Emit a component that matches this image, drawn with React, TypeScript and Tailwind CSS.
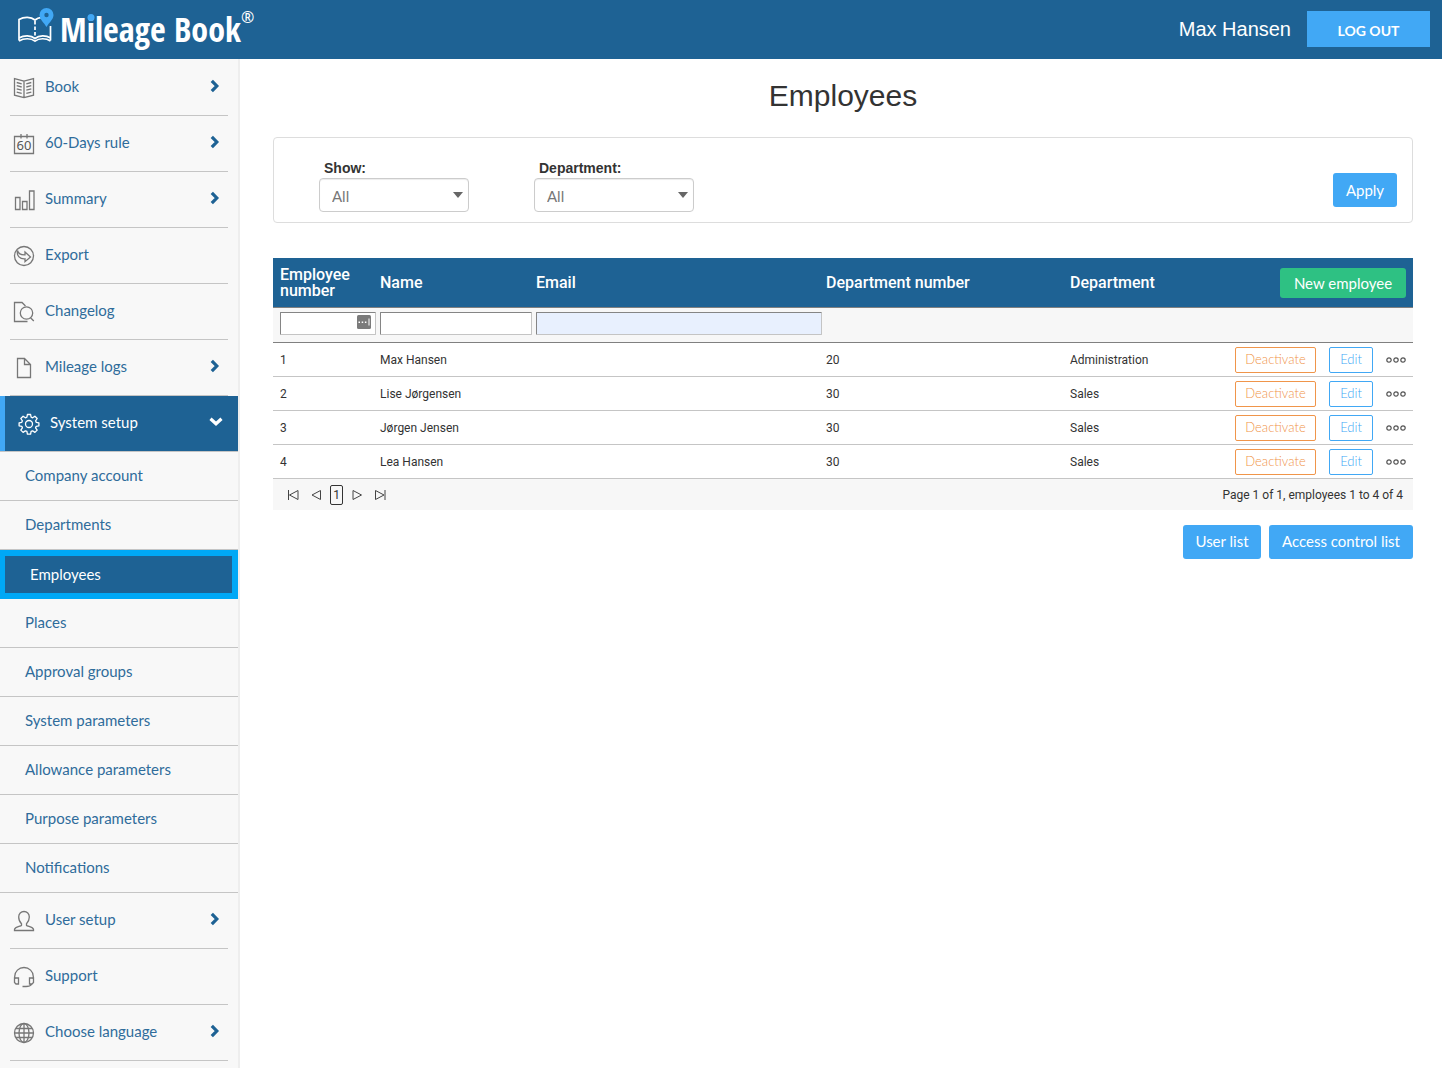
import type { ReactNode } from 'react';

interface NavItem {
  label: string;
  icon: ReactNode;
  expandable?: boolean;
}

interface Employee {
  number: number;
  name: string;
  email: string;
  departmentNumber: number;
  department: string;
}

const employees: Employee[] = [
  { number: 1, name: 'Max Hansen', email: '', departmentNumber: 20, department: 'Administration' },
  { number: 2, name: 'Lise Jørgensen', email: '', departmentNumber: 30, department: 'Sales' },
  { number: 3, name: 'Jørgen Jensen', email: '', departmentNumber: 30, department: 'Sales' },
  { number: 4, name: 'Lea Hansen', email: '', departmentNumber: 30, department: 'Sales' },
];

function Icon({ children }: { children: ReactNode }) {
  return (
    <svg
      viewBox="0 0 22 22"
      className="size-[22px] shrink-0"
      fill="none"
      stroke="currentColor"
      strokeWidth="1.3"
      aria-hidden="true">
      {children}
    </svg>
  );
}

const topItems: NavItem[] = [
  {
    label: 'Book',
    expandable: true,
    icon: (
      <Icon>
        <path d="M11 4.2 1.5 1.7v16.5L11 20.7l9.5-2.5V1.7L11 4.2zM11 4.2v16.5" />
        <path d="m3.700 5.500 5 1.300M3.700 8.700l5 1.300M3.700 11.900l5 1.300M3.700 15.100l5 1.300M18.300 5.500l-5 1.300M18.300 8.700l-5 1.300M18.300 11.900l-5 1.300M18.300 15.100l-5 1.300" />
      </Icon>
    ),
  },
  {
    label: '60-Days rule',
    expandable: true,
    icon: (
      <Icon>
        <path d="M1.500 3.500h19v17h-19zM8 1v4.500M14 1v4.500" />
        <text
          x="11"
          y="17"
          fontSize="13"
          textAnchor="middle"
          fill="#555"
          stroke="none"
          className="font-['Noto_Sans',sans-serif]">
          60
        </text>
      </Icon>
    ),
  },
  {
    label: 'Summary',
    expandable: true,
    icon: (
      <Icon>
        <path d="M2.500 8.500h4.500v12H2.500zM9.500 12.500H14v8H9.500zM16.500 2H21v18.500h-4.500z" />
      </Icon>
    ),
  },
  {
    label: 'Export',
    icon: (
      <Icon>
        <circle cx="11" cy="11" r="9.500" />
        <path d="M4.500 5.500c.8 3 3 4.500 7.500 4.400V7l5.500 5-5.500 4.700v-2.900C7 14.200 3.500 11 4.500 5.500z" />
      </Icon>
    ),
  },
  {
    label: 'Changelog',
    icon: (
      <Icon>
        <path d="M14.500 20.500h-13v-19H9l3.500 3.500" />
        <circle cx="13.500" cy="12" r="6.200" />
        <path d="m17.500 16.700 3.300 3.300" />
      </Icon>
    ),
  },
  {
    label: 'Mileage logs',
    expandable: true,
    icon: (
      <Icon>
        <path d="M4.500 1.500h7l6 6v13h-13zM11.500 1.500v6h6" />
      </Icon>
    ),
  },
];

const setupItems = [
  'Company account',
  'Departments',
  'Employees',
  'Places',
  'Approval groups',
  'System parameters',
  'Allowance parameters',
  'Purpose parameters',
  'Notifications',
];

const bottomItems: NavItem[] = [
  {
    label: 'User setup',
    expandable: true,
    icon: (
      <Icon>
        <path d="M11 1.500c-3 0-5.300 2-5.300 5.500 0 3 1 5 2.800 6.700v1.600c-.7 1.200-6.500 1.500-7 4v1.200h19v-1.200c-.5-2.500-6.300-2.800-7-4v-1.600c1.800-1.700 2.800-3.700 2.800-6.700 0-3.500-2.300-5.500-5.300-5.500z" />
      </Icon>
    ),
  },
  {
    label: 'Support',
    icon: (
      <Icon>
        <path d="M1.700 13V10.500a9.300 9 0 0 1 18.600 0V13" />
        <path d="M1.500 12h4v6h-2.500l-1.500-1.500zM20.500 12h-4v6h2.500l1.500-1.500zM18.500 18.500c-1 1.500-3 2-5.500 2H9.500" />
      </Icon>
    ),
  },
  {
    label: 'Choose language',
    expandable: true,
    icon: (
      <Icon>
        <circle cx="11" cy="11" r="9.500" />
        <ellipse cx="11" cy="11" rx="5" ry="9.500" />
        <path d="M11 1.500v19M1.500 11h19M3 6.500h16M3 15.500h16" />
      </Icon>
    ),
  },
];

function ChevronRight() {
  return (
    <svg
      viewBox="0 0 10 14"
      className="ml-auto h-3.5 w-2.5"
      fill="none"
      stroke="#1e6294"
      strokeWidth="3.2"
      aria-hidden="true">
      <path d="m1.800 1.800 5 5.200-5 5.200" />
    </svg>
  );
}

function SidebarItem({ item }: { item: NavItem }) {
  return (
    <li className="mx-2.5 border-b border-[#c5c5c5]">
      <a
        href="#"
        className="flex h-[55px] items-center pr-2 pb-1 pl-[3px] text-[#2f6c9b]">
        <span className="pt-1 text-[#777]">{item.icon}</span>
        <span className="ml-2.5 pt-0.5">{item.label}</span>
        {item.expandable && <ChevronRight />}
      </a>
    </li>
  );
}

function Sidebar() {
  return (
    <nav className="w-60 shrink-0 border-r-2 border-[#eee] bg-[#f8f8f8] pt-px font-['Lato',sans-serif] text-[15px]">
      <ul>
        {topItems.map((item) => (
          <SidebarItem
            key={item.label}
            item={item}
          />
        ))}
        <li>
          <a
            href="#"
            className="flex h-[55px] items-center border-l-[5px] border-[#41a8f5] bg-[#1e6294] pr-[15px] pb-1 pl-[13px] text-white">
            <span className="pt-1">
              <Icon>
                <circle cx="11" cy="11" r="3.500" />
                <path
                  strokeLinejoin="round"
                  d="M9.400 1.500h3.200l.5 2.700 1.500.6 2.300-1.600 2.300 2.300-1.600 2.300.6 1.500 2.700.5v3l-2.700.5-.6 1.500 1.600 2.300-2.300 2.300-2.300-1.600-1.500.6-.5 2.700H9.400l-.5-2.700-1.500-.6-2.300 1.600-2.300-2.300 1.600-2.300-.6-1.500-2.700-.5v-3l2.700-.5.6-1.500-1.600-2.300 2.300-2.300 2.300 1.600 1.500-.6z"
                />
              </Icon>
            </span>
            <span className="ml-2.5 pt-0.5">System setup</span>
            <svg
              viewBox="0 0 14 10"
              className="ml-auto h-2.5 w-3.5"
              fill="none"
              stroke="white"
              strokeWidth="3.200"
              aria-hidden="true">
              <path d="m1.500 1.800 5.500 5 5.500-5" />
            </svg>
          </a>
          <ul className="border-t border-[#c5c5c5]">
            {setupItems.map((label) =>
              label === 'Employees' ? (
                <li key={label}>
                  <a
                    href="#"
                    aria-current="page"
                    className="flex h-[49px] items-center border-[6px] border-l-[5px] border-[#00a8f6] bg-[#1e6294] pl-[25px] text-white">
                    {label}
                  </a>
                </li>
              ) : (
                <li
                  key={label}
                  className="border-b border-[#c5c5c5]">
                  <a
                    href="#"
                    className="flex h-12 items-center pb-0.5 pl-[25px] text-[#2f6c9b]">
                    {label}
                  </a>
                </li>
              )
            )}
          </ul>
        </li>
        {bottomItems.map((item) => (
          <SidebarItem
            key={item.label}
            item={item}
          />
        ))}
      </ul>
    </nav>
  );
}

function Header() {
  return (
    <header className="flex h-[59px] items-center bg-[#1e6294] pr-3 pb-px pl-4 text-white">
      <a
        href="#"
        className="flex items-center">
        <svg
          viewBox="0 0 40 40"
          className="mb-0.5 size-10"
          fill="none"
          stroke="white"
          strokeWidth="1.700"
          aria-hidden="true">
          <path d="M3 32.500V11.500c5-3 12-3 16 .5 2-1.800 4-2.500 6.500-2.700M34.500 18v14.500M3 30c5-3 12-3 16 .5 4-3.500 11-3.500 15.500-.5M3 33c5-3 12-3 16 .2 4-3.200 11-3.200 15.500-.2" />
          <path
            d="M19 13v17"
            strokeDasharray="3.500 2"
          />
          <path
            d="M30.500 0a7 7 0 0 0-7 7c0 4.500 4.500 7.500 7 12 2.500-4.500 7-7.500 7-12a7 7 0 0 0-7-7zm0 4.800a2.200 2.200 0 1 1 0 4.400 2.200 2.200 0 0 1 0-4.400z"
            fill="#41a8f5"
            fillRule="evenodd"
            stroke="none"
          />
        </svg>
        <span className="ml-1 font-['Open_Sans_Condensed','Open_Sans',sans-serif] text-[34px] leading-[58px] font-bold">
          M
          <span className="relative">
            i
            <span className="absolute top-2 left-1/2 size-[7px] -translate-x-1/2 rounded-full bg-[#41a8f5]" />
          </span>
          leage Book
        </span>
        <span className="mb-6 font-['Noto_Sans',sans-serif] text-base leading-4">®</span>
      </a>
      <span className="ml-auto font-['Liberation_Sans',sans-serif] text-xl">Max Hansen</span>
      <button
        type="button"
        className="ml-4 h-9 w-[123px] bg-[#41a8f5] pt-1 font-['Lato',sans-serif] text-sm font-bold">
        LOG OUT
      </button>
    </header>
  );
}

function FilterSelect({ id, label, className }: { id: string; label: string; className: string }) {
  return (
    <div className={className}>
      <label
        htmlFor={id}
        className="block pl-[5px] text-sm leading-5 font-bold">
        {label}
      </label>
      <div className="relative">
        <select
          id={id}
          className="h-[34px] w-full appearance-none rounded border border-[#ccc] bg-white pt-0.5 pl-3 font-['Lato',sans-serif] text-[15px] text-[#777] shadow-[inset_0_1px_1px_rgba(0,0,0,0.075)]">
          <option>All</option>
        </select>
        <svg
          viewBox="0 0 10 6"
          className="pointer-events-none absolute top-3.5 right-1.5 h-1.5 w-2.5"
          fill="#666"
          aria-hidden="true">
          <path d="M0 0h10L5 6z" />
        </svg>
      </div>
    </div>
  );
}

function FilterPanel() {
  return (
    <form className="mt-[23px] flex h-[86px] items-start rounded border border-[#ddd] pr-[15px] pl-[45px]">
      <FilterSelect
        id="show"
        label="Show:"
        className="mt-5 w-[150px]"
      />
      <FilterSelect
        id="department"
        label="Department:"
        className="mt-5 ml-[65px] w-40"
      />
      <button
        type="button"
        className="mt-[35px] ml-auto h-[34px] w-16 rounded-[3px] bg-[#41a8f5] font-['Lato',sans-serif] text-[15px] text-white">
        Apply
      </button>
    </form>
  );
}

const pagerIcons = {
  first: 'M2.500 2v10M12 2.500v9L3.500 7z',
  previous: 'M11.500 2.500v9L3 7z',
  next: 'M3 2.500v9L11.500 7z',
  last: 'M12 2v10M2.500 2.500v9L11 7z',
};

function PagerButton({ to }: { to: keyof typeof pagerIcons }) {
  return (
    <button
      type="button"
      aria-label={to}>
      <svg
        viewBox="0 0 14 14"
        className="size-3.5"
        fill="none"
        stroke="#444"
        aria-hidden="true">
        <path d={pagerIcons[to]} />
      </svg>
    </button>
  );
}

const filterInput =
  'block h-[23px] w-full rounded-[1px] border border-t-[#858585] border-r-[#c4c4c4] border-b-[#c4c4c4] border-l-[#858585] px-1';

function EmployeeTable() {
  return (
    <section className="mt-[35px] font-['Roboto',sans-serif] text-xs">
      <table className="w-full table-fixed border-collapse text-left">
        <colgroup>
          <col className="w-[105px]" />
          <col className="w-[156px]" />
          <col className="w-[290px]" />
          <col className="w-[244px]" />
          <col />
          <col className="w-[190px]" />
        </colgroup>
        <thead>
          <tr className="h-[49px] bg-[#1e6294] text-base leading-4 text-white">
            <th className="pt-0.5 pr-0.5 pl-[7px] font-medium">Employee number</th>
            <th className="px-0.5 pt-0.5 font-medium">Name</th>
            <th className="px-0.5 pt-0.5 font-medium">Email</th>
            <th className="px-0.5 pt-0.5 font-medium">Department number</th>
            <th className="px-0.5 pt-0.5 font-medium">Department</th>
            <th className="pt-0.5 pr-[7px] text-right font-normal">
              <button
                type="button"
                className="h-[30px] w-[126px] rounded-[3px] bg-[#2ec183] font-['Lato',sans-serif] text-[15px]">
                New employee
              </button>
            </th>
          </tr>
          <tr className="h-[35px] border-y border-[#808080] bg-[#f7f7f7]">
            <td className="pr-0.5 pb-0.5 pl-[7px]">
              <div className="relative">
                <input
                  type="text"
                  aria-label="Filter by employee number"
                  className={`${filterInput} bg-white`}
                />
                <svg
                  viewBox="0 0 14 14"
                  className="absolute top-[3px] right-[5px] size-3.5"
                  aria-hidden="true">
                  <rect
                    width="14"
                    height="14"
                    rx="1.500"
                    fill="#7b7b7b"
                  />
                  <path
                    d="M1.500 6.500H3V8H1.500zM4.700 6.500h1.500V8H4.700zM7.900 6.500h1.500V8H7.900zM11.500 3.500h1v7h-1z"
                    fill="white"
                  />
                </svg>
              </div>
            </td>
            <td className="px-0.5 pb-0.5">
              <input
                type="text"
                aria-label="Filter by name"
                className={`${filterInput} bg-white`}
              />
            </td>
            <td className="px-0.5 pb-0.5">
              <input
                type="text"
                aria-label="Filter by email"
                className={`${filterInput} bg-[#e8f0fe]`}
              />
            </td>
            <td colSpan={3} />
          </tr>
        </thead>
        <tbody>
          {employees.map((employee) => (
            <tr
              key={employee.number}
              className="h-[34px] border-b border-[#c5c5c5]">
              <td className="pt-0.5 pr-0.5 pl-[7px]">{employee.number}</td>
              <td className="px-0.5 pt-0.5">{employee.name}</td>
              <td className="px-0.5 pt-0.5">{employee.email}</td>
              <td className="px-0.5 pt-0.5">{employee.departmentNumber}</td>
              <td className="px-0.5 pt-0.5">{employee.department}</td>
              <td className="pt-0.5 pr-[7px]">
                <div className="flex items-center justify-end font-['Lato',sans-serif] text-[13px] font-light">
                  <button
                    type="button"
                    className="h-[26px] w-[81px] rounded-[2px] border border-[#f0954a] text-[#f0954a]">
                    Deactivate
                  </button>
                  <button
                    type="button"
                    className="ml-[13px] h-[26px] w-11 rounded-[2px] border border-[#41a8f5] text-[#41a8f5]">
                    Edit
                  </button>
                  <button
                    type="button"
                    aria-label={`More actions for ${employee.name}`}
                    className="ml-[13px]">
                    <svg
                      viewBox="0 0 20 8"
                      className="h-2 w-5"
                      fill="none"
                      stroke="#555"
                      strokeWidth="1.200"
                      aria-hidden="true">
                      <circle cx="3" cy="4" r="2.200" />
                      <circle cx="10" cy="4" r="2.200" />
                      <circle cx="17" cy="4" r="2.200" />
                    </svg>
                  </button>
                </div>
              </td>
            </tr>
          ))}
        </tbody>
      </table>
      <div className="flex h-[31px] items-center bg-[#f7f7f7] pt-0.5 pr-2.5 pl-[13px]">
        <div className="flex items-center gap-[9px]">
          <PagerButton to="first" />
          <PagerButton to="previous" />
          <button
            type="button"
            aria-current="page"
            className="-mx-0.5 h-5 w-[13px] rounded-[2px] border border-[#333]">
            1
          </button>
          <PagerButton to="next" />
          <PagerButton to="last" />
        </div>
        <span className="ml-auto">Page 1 of 1, employees 1 to 4 of 4</span>
      </div>
    </section>
  );
}

export default function App() {
  return (
    <div className="flex min-h-screen flex-col bg-white text-[#333]">
      <Header />
      <div className="flex flex-1">
        <Sidebar />
        <main className="min-w-0 flex-1 pr-[29px] pl-[33px] font-['Liberation_Sans',sans-serif]">
          <h1 className="pt-[19px] text-center text-[30px] leading-9">Employees</h1>
          <FilterPanel />
          <EmployeeTable />
          <div className="mt-[15px] flex justify-end gap-2 font-['Lato',sans-serif] text-[15px] text-white">
            <button
              type="button"
              className="h-[34px] w-[78px] rounded-[3px] bg-[#41a8f5]">
              User list
            </button>
            <button
              type="button"
              className="h-[34px] w-36 rounded-[3px] bg-[#41a8f5]">
              Access control list
            </button>
          </div>
        </main>
      </div>
    </div>
  );
}
